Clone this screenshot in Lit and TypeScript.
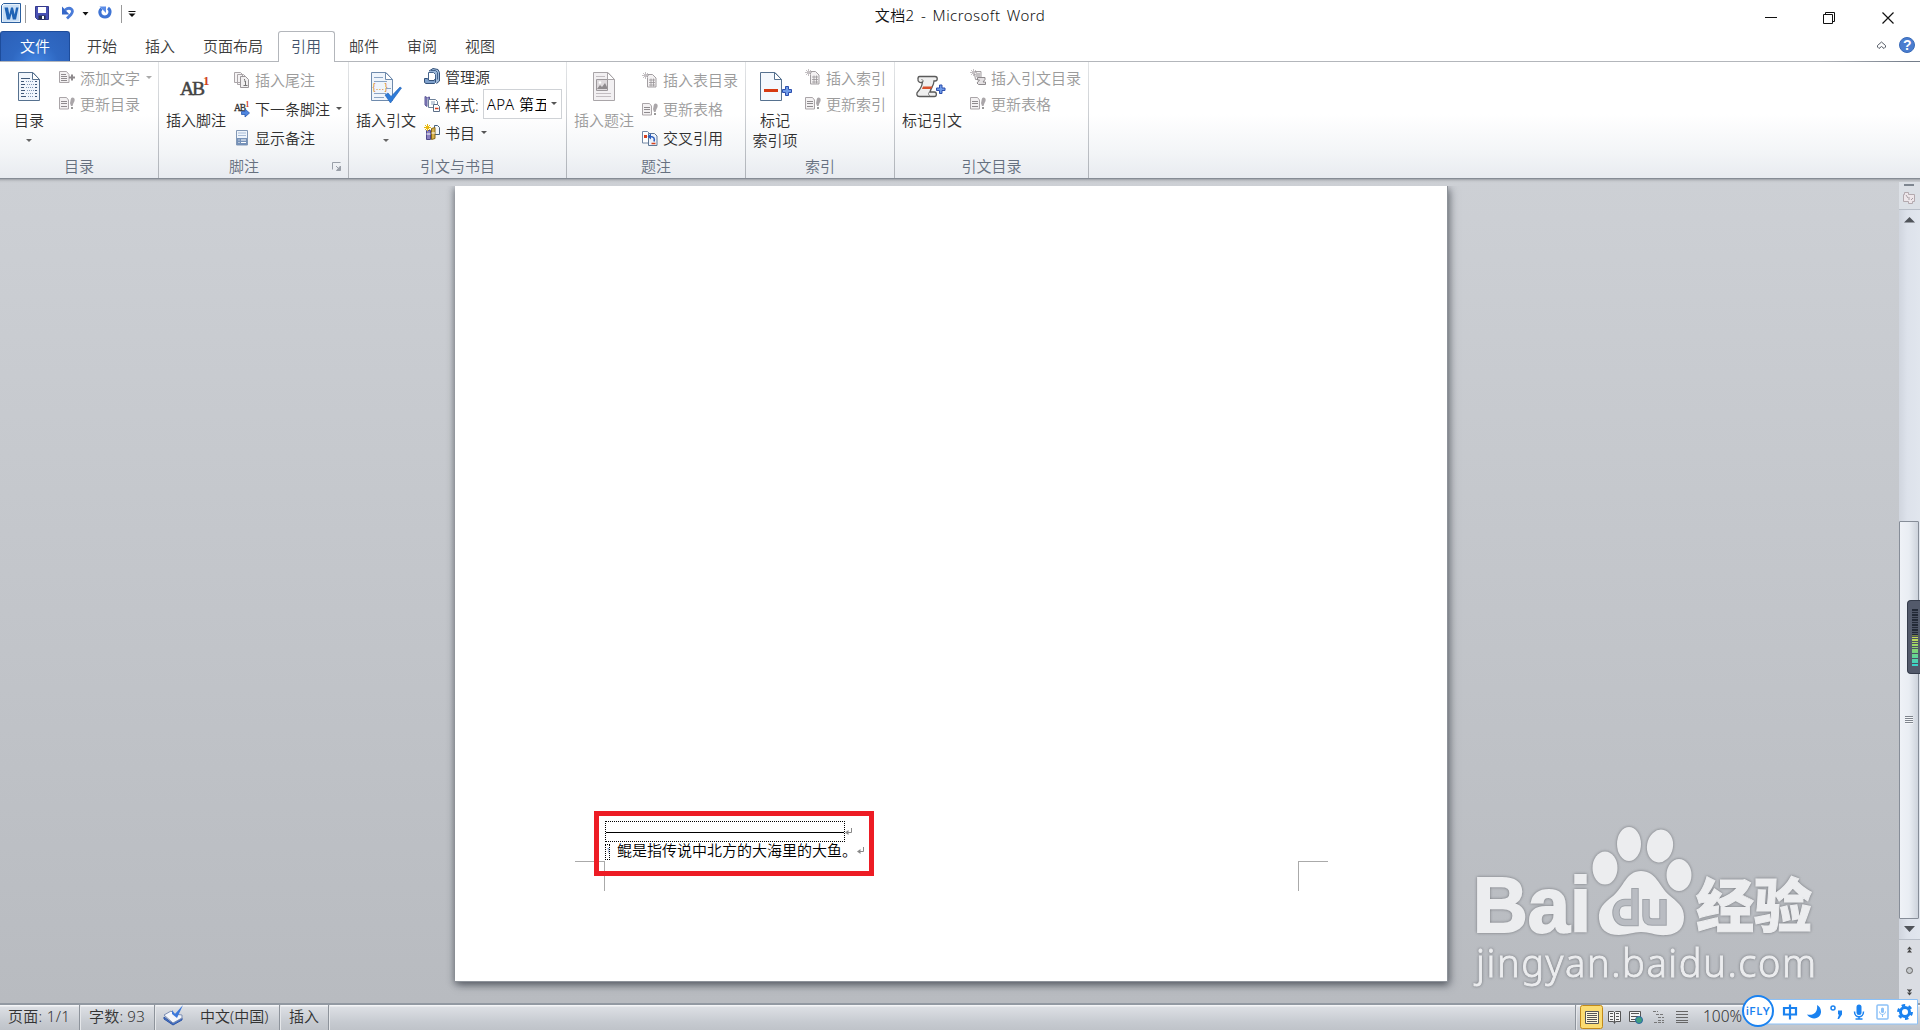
import { LitElement, html, css, svg, nothing } from 'lit';
import type { TemplateResult } from 'lit';
import { customElement, property } from 'lit/decorators.js';
import { classMap } from 'lit/directives/class-map.js';

const sheet = (stroke: string, fill: string) => svg`
  <path d="M1.5 1.5h14.5l6.5 7v21h-21z" fill=${fill} stroke=${stroke} />
  <path d="M15.500 1.500v7h7z" fill="#fff" stroke=${stroke} />
`;

const sparkle = (color: string) => svg`
  <path d="M3.500 0v7M0 3.500h7M1 1l5 5M6 1l-5 5" stroke=${color} stroke-width="1" />
`;

const icons: Record<string, TemplateResult<2>> = {
  toc: svg`
    ${sheet('#56718f', '#f1f6fc')}
    <path d="M4 7.500h9M4 10.500h3M4 13.500h4M4 16.500h3M4 19.500h4M4 22.500h3M4 25.500h5" stroke="#3f5878" />
    <path d="M9 10.500h8M10 13.500h7M9 16.500h8M10 19.500h7M9 22.500h8M11 25.500h6" stroke="#7d96b5" stroke-dasharray="1 1" />
    <path d="M18 10.500h2M18 13.500h2M18 16.500h2M18 19.500h2M18 22.500h2M18 25.500h2" stroke="#3f5878" />
  `,
  footnote: svg`
    <text x="0" y="24" font-family="Liberation Serif, serif" font-size="19.500" fill="#444" stroke="#444" stroke-width=".5" textLength="25">AB</text>
    <text x="23" y="14" font-family="Liberation Serif, serif" font-size="13" font-weight="700" fill="#d0421c">1</text>
  `,
  citation: svg`
    ${sheet('#6f8bad', '#eff5fc')}
    <path d="M4 6.500h9M4 10.500h13M4 22.500h12M4 26.500h10" stroke="#8aa4c4" />
    <text x="2.500" y="19" font-family="Liberation Sans, sans-serif" font-size="9" fill="#d97b13">{…}</text>
    <path d="M16 17.500h5" stroke="#8aa4c4" />
    <path d="M15 24l3-2 3 3.500 9-9.500 1.500 1-11 15z" fill="#2d7bd8" stroke="#1c5db3" stroke-width=".6" />
  `,
  caption: svg`
    ${sheet('#a9a5a8', '#f2f0f2')}
    <path d="M4 5.500h9M4 22.500h15M4 25.500h15" stroke="#c2bdc1" />
    <path d="M4.500 8.500h11v11h-11z" fill="#dedadd" stroke="#9d999c" />
    <path d="M5 18l3-4 2 2 3-4 2 4v2z" fill="#8f8b8e" />
    <circle cx="8" cy="11.500" r="1.200" fill="#fff" />
  `,
  mark: svg`
    ${sheet('#56718f', '#f4f8fd')}
    <path d="M5 18h14v3H5z" fill="#d63a12" />
    <path d="M26.500 15.500h3v3h3v3h-3v3h-3v-3h-3v-3h3z" fill="#6f9be8" stroke="#2c4fae" />
  `,
  markCite: svg`
    <path d="M3.500 5.500h15.500c3 0 3 4.500 0 4.500h-1c0 4-3 7-4 11h4.500c2.500 0 2.500 4.500 0 4.500H3.500c-3 0-3.500-3-1.500-5 3-3 4-6 4.500-9.500-2.500 1.500-5-.5-4.500-3 0-1.500.5-2.500 1.500-2.500z" fill="#efefef" stroke="#5a5a5a" stroke-width="1.300" />
    <path d="M6.500 11c1-1 .5-2.500-1-2.500M14 21c-2 0-2 3 0 4" stroke="#777" />
    <path d="M7 15.500h9.500l-1.500 2.500h-9z" fill="#d8512d" />
    <path d="M23.500 14h2.500v3h3v2.500h-3v3h-2.500v-3h-3v-2.500h3z" fill="#6f9be8" stroke="#2c4fae" />
  `,
  addText: svg`
    <path d="M.5 2.500h7l2.500 3v8H.5z" fill="#f3f1f2" stroke="#aaa5a8" />
    <path d="M2 5.500h5M2 7.500h6M2 9.500h6M2 11.500h6" stroke="#8f8b8e" />
    <path d="M10 8.500h6M13 5.500v6" stroke="#8d898c" stroke-width="2" />
  `,
  update: svg`
    <path d="M.5 2.500h7l2 2.500v9h-9z" fill="#f3f1f2" stroke="#aaa5a8" />
    <path d="M2 6.500h6M2 8.500h6M2 11.500h6" stroke="#8f8b8e" />
    <path d="M11 8c1-2 0-5 2.500-5.500 3 0 2.500 4 1 5.500l-1 3h-1.500z" fill="#aaa6a9" />
    <path d="M12 12h2v2h-2z" fill="#999" />
  `,
  endnote: svg`
    <path d="M.5.5h6l2 2v8h-8zM3.500 2.500h6l2 2v8h-8z" fill="#f5f3f4" stroke="#aaa5a8" />
    <path d="M6.500 4.500h5l3 3v8h-8z" fill="#f1eff0" stroke="#9b979a" />
    <path d="M10 9h1.500v4M9.500 13.500h4M10.500 7v1.200" stroke="#777" fill="none" />
  `,
  nextNote: svg`
    <text x="0" y="10" font-family="Liberation Serif, serif" font-size="9.500" fill="#333" stroke="#333" stroke-width=".3" textLength="12">AB</text>
    <text x="11.500" y="6" font-family="Liberation Serif, serif" font-size="7.500" font-weight="700" fill="#d0421c">1</text>
    <path d="M7.500 10.500h3.500v-2.500l4.500 4-4.500 4v-2.500h-3.500z" fill="#4f86e0" stroke="#2859b0" stroke-width=".8" />
  `,
  showNotes: svg`
    <path d="M2.500.5h11v14.500h-11z" fill="#eef4fb" stroke="#8298b6" />
    <path d="M4 3h8M4 5.500h8" stroke="#a8bcd7" />
    <path d="M3 8h10v7H3z" fill="#7591b8" />
    <path d="M4.500 10h1M4.500 12.500h1M7 10h5M7 12.500h5" stroke="#fff" />
  `,
  sources: svg`
    <path d="M5 3l4-2.500 5 1 1.500 3V13l-3 2.500" fill="#9db8d8" stroke="#34527a" />
    <path d="M4.500 4.500h5l2 2v6h-7z" fill="#fff" stroke="#45648c" />
    <path d="M7 2.500h4.500l2 2v7" fill="none" stroke="#45648c" />
    <path d="M.5 10.500h3l1.500 2h5l1.500-2v4l-1 1H2l-1.500-1z" fill="#7fa1cc" stroke="#34527a" />
  `,
  style: svg`
    <path d="M1 .5l2 1v9l-2-1.500zM3.500 1.500l2-.5v8" fill="#8c87c6" stroke="#5b5796" />
    <path d="M4.500 3.500h7l2 2v6h-9z" fill="#fff" stroke="#6d8098" />
    <path d="M7 6h4M7 8h4" stroke="#8aa0bd" />
    <path d="M9.500 8.500h4l2 2v5h-6z" fill="#fff" stroke="#5c6e87" />
    <path d="M11 12.500h3.500" stroke="#d33a1e" stroke-width="1.500" />
  `,
  biblio: svg`
    <path d="M2.500 6.500h4v9h-4z" fill="#8a80bf" stroke="#514a8c" />
    <path d="M10.500 1.500h3l2 2v7h-5z" fill="#f3f7fc" stroke="#45607f" />
    <path d="M7.500 4.500l3.500-1v11l-3.500 1z" fill="#d6b04c" stroke="#866717" />
    <path d="M7.500 9h3.500M2.500 10h4" stroke="#fff" />
    ${sparkle('#e8b80c')}
  `,
  tableOf: svg`
    <path d="M5.500 2.500h5l3.500 3.500v9h-8.500z" fill="#f3f1f2" stroke="#a29ea1" />
    <path d="M7 8h6M7 10.500h6M7 13h6M9 6.500v8M11.500 6.500v8" stroke="#989497" stroke-width=".8" />
    ${sparkle('#c4c0c3')}
  `,
  crossRef: svg`
    <path d="M.5 1.500h5l1.500 1.500v10h-6.500z" fill="#fff" stroke="#7288a5" />
    <path d="M2 5h3v3H2z" fill="#d8431f" />
    <path d="M6.500 3.500h6l2.500 2.500v9.500h-8.500z" fill="#edf3fb" stroke="#5c7695" />
    <path d="M9.500 13.500h4" stroke="#d8431f" stroke-width="1.500" />
    <path d="M12 11.500c1-3 0-5-4-5" stroke="#2a5dbd" stroke-width="1.600" fill="none" />
    <path d="M5.500 6.500l3.500-3v6z" fill="#2a5dbd" />
  `,
  citeToc: svg`
    <path d="M4 2.500h7v8H5.500z" fill="#f1eff0" stroke="#a29ea1" />
    <path d="M6 5h4M6 7h4" stroke="#989497" />
    <path d="M7.500 8.500h7.500v2l-2 2.500h2.500v2.500H8.500l-1.500-1.500 2.500-3H7.500z" fill="#e4e1e3" stroke="#8d898c" />
    ${sparkle('#c4c0c3')}
  `,
};

@customElement('ribbon-large-button')
export class RibbonLargeButton extends LitElement {
  @property() icon = '';
  @property() label = '';
  @property({ type: Boolean }) arrow = false;
  @property({ type: Boolean }) disabled = false;
  @property({ type: Boolean }) wide = false;

  static styles = css`
    :host {
      display: flex;
      flex-direction: column;
      align-items: center;
      box-sizing: border-box;
      flex: none;
      width: 74px;
      padding-top: 9px;
    }

    svg {
      width: 34px;
      height: 34px;
      margin-left: 10px;
      overflow: visible;
      flex: none;
    }

    .wide {
      margin-left: 2px;
    }

    .label {
      margin-top: 5px;
      line-height: 20px;
      white-space: pre;
      text-align: center;
      color: #303030;
    }

    .disabled {
      color: #9b9b9b;
    }

    .arrow {
      margin-top: 9px;
      border: 3px solid transparent;
      border-top-color: #666;
      border-bottom: 0;
    }
  `;

  render() {
    return html`
      <svg class=${classMap({ wide: this.wide })} viewBox="0 0 34 34" fill="none">${icons[this.icon]}</svg>
      <div class=${classMap({ label: true, disabled: this.disabled })}>${this.label}</div>
      ${this.arrow ? html`<div class="arrow"></div>` : nothing}
    `;
  }
}

@customElement('ribbon-item')
export class RibbonItem extends LitElement {
  @property() icon = '';
  @property() label = '';
  @property({ type: Boolean }) arrow = false;
  @property({ type: Boolean }) disabled = false;

  static styles = css`
    :host {
      display: flex;
      align-items: center;
    }

    svg {
      width: 16px;
      height: 16px;
      margin-right: 5px;
      overflow: visible;
    }

    .label {
      color: #303030;
      white-space: nowrap;
    }

    .disabled {
      color: #9b9b9b;
    }

    .arrow {
      margin-left: 6px;
      border: 3px solid transparent;
      border-top: 3px solid #555;
      border-bottom: 0;
    }

    .arrow.disabled {
      border-top-color: #aaa;
    }
  `;

  render() {
    return html`
      <svg viewBox="0 0 16 16" fill="none">${icons[this.icon]}</svg>
      <span class=${classMap({ label: true, disabled: this.disabled })}>${this.label}</span>
      ${this.arrow ? html`<span class=${classMap({ arrow: true, disabled: this.disabled })}></span>` : nothing}
      <slot></slot>
    `;
  }
}

@customElement('word-titlebar')
export class WordTitlebar extends LitElement {
  static styles = css`
    :host {
      display: grid;
      grid-template-columns: 1fr auto 1fr;
      height: 31px;
      background: #fff;
    }

    .quick {
      padding-top: 3px;
    }

    .title {
      line-height: 30px;
      color: #111;
      letter-spacing: 0.45px;
      word-spacing: 2px;
    }

    .controls {
      display: flex;
      justify-content: flex-end;
    }

    svg {
      display: block;
    }
  `;

  render() {
    return html`
      <svg class="quick" width="140" height="26" viewBox="0 0 140 26" fill="none">
        <path d="M3.500.5h17v19H1.500V2.500z" fill="#e7f1fb" stroke="#2b5f9e" />
        <path d="M3 19V3l2-1h14v16z" fill="#c8def5" />
        <path d="M4.500 4.500h3.500l1.300 7 1.700-7h2l1.700 7 1.300-7h2.500l-2.500 12h-3.200l-1.300-6-1.500 6h-3z" fill="#1f63b5" />
        <path d="M25.500 2v18" stroke="#999" />
        <path d="M35.500 3.500h13v13h-11l-2-2z" fill="#4a52b5" stroke="#35398c" />
        <path d="M38 4h8v6h-8z" fill="#fff" />
        <path d="M38.500 12.500h7v4h-7z" fill="#27304d" />
        <path d="M42 13h2v3h-2z" fill="#fff" />
        <path d="M65 7c5-4 10 0 6 4.500l-4 4" stroke="#4a7bd8" stroke-width="2.800" />
        <path d="M62 3.500v8h7.500z" fill="#3567c8" />
        <path d="M82.500 9h6l-3 3.500z" fill="#111" />
        <path d="M108 5c4 3 1.500 9-3 9s-7-5-3.500-8.500" stroke="#3f74d4" stroke-width="3" />
        <path d="M99.500 3.500h6.500v6.500z" fill="#5c8de8" />
        <path d="M121.500 2v18" stroke="#999" />
        <path d="M128.500 8.500h7" stroke="#111" />
        <path d="M128.500 10.500h7l-3.500 3.500z" fill="#111" />
      </svg>
      <div class="title">文档2 - Microsoft Word</div>
      <div class="controls">
        <svg width="160" height="31" viewBox="0 0 160 31" fill="none" stroke="#111">
          <path d="M5 17.500h12" />
          <path d="M63.500 14.500h9v9h-9zM65.500 14v-1.500h9v9h-1.500" />
          <path d="M122.500 12.500l11 11M133.500 12.500l-11 11" stroke-width="1.200" />
        </svg>
      </div>
    `;
  }
}

@customElement('word-tabs')
export class WordTabs extends LitElement {
  static styles = css`
    :host {
      display: flex;
      height: 31px;
      background: linear-gradient(90deg, #b3b6bb 0 1820px, #747d8a 1910px) bottom / 100% 1px no-repeat #fff;
    }

    .file {
      box-sizing: border-box;
      width: 70px;
      height: 30px;
      margin-right: 3px;
      border: 1px solid #1d4c9b;
      border-bottom: 0;
      border-radius: 3px 3px 0 0;
      background: radial-gradient(ellipse at 50% 115%, #4387e4 0, #2f68c2 50%, #2c60b8 100%);
      color: #fff;
      text-align: center;
      line-height: 29px;
    }

    .tab {
      padding: 0 14px;
      line-height: 31px;
      color: #3c3c3c;
    }

    .active {
      box-sizing: border-box;
      width: 57px;
      margin: 0 0 0 1px;
      padding: 0 12px;
      border: 1px solid #b3b6bb;
      border-bottom: 0;
      border-radius: 3px 3px 0 0;
      background: #fff;
      line-height: 29px;
      color: #44546c;
    }

    .help {
      margin-left: auto;
    }
  `;

  render() {
    return html`
      <div class="file">文件</div>
      ${['开始', '插入', '页面布局', '引用', '邮件', '审阅', '视图'].map(
        (name) => html`<div class=${classMap({ tab: true, active: name === '引用' })}>${name}</div>`
      )}
      <svg class="help" width="50" height="30" viewBox="0 0 50 30" fill="none">
        <path d="M7.500 16v-1.500l4-3.500 4 3.500V16l-1.500 1.500-2.500-2-2.500 2z" stroke="#555b66" />
        <circle cx="37" cy="14" r="7.500" fill="#4a7dcf" stroke="#396bb9" />
        <text x="33" y="19" font-family="Liberation Sans, sans-serif" font-size="14" font-weight="700" fill="#fff">?</text>
      </svg>
    `;
  }
}

@customElement('word-ribbon')
export class WordRibbon extends LitElement {
  static styles = css`
    :host {
      display: flex;
      height: 116px;
      border-bottom: 1px solid #868c95;
      background: linear-gradient(#fff 45%, #f3f5f7 78%, #e8ebf0);
    }

    .group {
      display: flex;
      flex-direction: column;
      box-sizing: border-box;
      border-image: linear-gradient(#e4e6e8, #aeb2b8) 1;
      border-width: 0 1px 0 0;
      border-style: solid;
    }

    .body {
      display: flex;
      height: 93px;
    }

    .items {
      display: flex;
      flex-direction: column;
      padding-left: 1px;
    }

    .two {
      padding-top: 2px;
    }

    .two ribbon-item {
      height: 26px;
    }

    .mid {
      padding-top: 0;
    }

    .mid ribbon-item {
      height: 28px;
    }

    .three {
      padding-top: 3px;
    }

    .three ribbon-item {
      height: 29px;
    }

    .caption {
      display: grid;
      grid-template-columns: 20px 1fr 20px;
      text-align: center;
      line-height: 22px;
      color: #66707f;
    }

    .caption span {
      grid-column: 2;
    }

    .caption svg {
      margin: 6px 0 0 2px;
    }

    .g1 {
      width: 159px;
    }

    .g2 {
      width: 190px;
    }

    .g2 .caption {
      grid-template-columns: 0 1fr 19px;
    }

    .g3 {
      width: 218px;
    }

    .g4 {
      width: 179px;
    }

    .g5 {
      width: 149px;
    }

    .g6 {
      width: 194px;
    }

    .narrow {
      width: 58px;
    }

    .combo {
      display: flex;
      align-items: center;
      box-sizing: border-box;
      width: 79px;
      height: 30px;
      margin: -1px 0 0 4px;
      padding: 0 4px 0 3px;
      border: 1px solid #cfd2d6;
      background: #fff;
      color: #000;
      letter-spacing: 0.5px;
    }

    .combo span {
      width: 60px;
      overflow: hidden;
      white-space: nowrap;
    }

    .combo i {
      margin-left: 5px;
      border: 3px solid transparent;
      border-top: 3px solid #555;
      border-bottom: 0;
    }
  `;

  render() {
    return html`
      <div class="group g1">
        <div class="body">
          <ribbon-large-button class="narrow" icon="toc" label="目录" arrow></ribbon-large-button>
          <div class="items two">
            <ribbon-item icon="addText" label="添加文字" arrow disabled></ribbon-item>
            <ribbon-item icon="update" label="更新目录" disabled></ribbon-item>
          </div>
        </div>
        <div class="caption"><span>目录</span></div>
      </div>
      <div class="group g2">
        <div class="body">
          <ribbon-large-button icon="footnote" label="插入脚注" wide></ribbon-large-button>
          <div class="items three">
            <ribbon-item icon="endnote" label="插入尾注" disabled></ribbon-item>
            <ribbon-item icon="nextNote" label="下一条脚注" arrow></ribbon-item>
            <ribbon-item icon="showNotes" label="显示备注"></ribbon-item>
          </div>
        </div>
        <div class="caption">
          <span>脚注</span>
          <svg width="11" height="11" viewBox="0 0 11 11" fill="none" stroke="#999fa8">
            <path d="M1.500 8.500v-7h8M5 5l3.500 3.500" />
            <path d="M9.500 5v4.500H5.500z" fill="#999fa8" />
          </svg>
        </div>
      </div>
      <div class="group g3">
        <div class="body">
          <ribbon-large-button icon="citation" label="插入引文" arrow wide></ribbon-large-button>
          <div class="items mid">
            <ribbon-item icon="sources" label="管理源"></ribbon-item>
            <ribbon-item icon="style" label="样式:">
              <div class="combo"><span>APA 第五版</span><i></i></div>
            </ribbon-item>
            <ribbon-item icon="biblio" label="书目" arrow></ribbon-item>
          </div>
        </div>
        <div class="caption"><span>引文与书目</span></div>
      </div>
      <div class="group g4">
        <div class="body">
          <ribbon-large-button icon="caption" label="插入题注" disabled></ribbon-large-button>
          <div class="items three">
            <ribbon-item icon="tableOf" label="插入表目录" disabled></ribbon-item>
            <ribbon-item icon="update" label="更新表格" disabled></ribbon-item>
            <ribbon-item icon="crossRef" label="交叉引用"></ribbon-item>
          </div>
        </div>
        <div class="caption"><span>题注</span></div>
      </div>
      <div class="group g5">
        <div class="body">
          <ribbon-large-button class="narrow" icon="mark" label=${'标记\n索引项'} wide></ribbon-large-button>
          <div class="items two">
            <ribbon-item icon="tableOf" label="插入索引" disabled></ribbon-item>
            <ribbon-item icon="update" label="更新索引" disabled></ribbon-item>
          </div>
        </div>
        <div class="caption"><span>索引</span></div>
      </div>
      <div class="group g6">
        <div class="body">
          <ribbon-large-button icon="markCite" label="标记引文" wide></ribbon-large-button>
          <div class="items two">
            <ribbon-item icon="citeToc" label="插入引文目录" disabled></ribbon-item>
            <ribbon-item icon="update" label="更新表格" disabled></ribbon-item>
          </div>
        </div>
        <div class="caption"><span>引文目录</span></div>
      </div>
    `;
  }
}

@customElement('word-document')
export class WordDocument extends LitElement {
  static styles = css`
    :host {
      display: block;
      box-sizing: border-box;
      width: 993px;
      height: 796px;
      padding: 635px 0 0 120px;
      background: #fff;
      border-right: 1px solid #8d9299;
      border-bottom: 1px solid #8d9299;
      box-shadow: 2px 3px 8px rgba(50, 55, 65, 0.6), -2px 2px 6px rgba(50, 55, 65, 0.3);
      clip-path: inset(0 -14px -14px -14px);
      position: relative;
      color: #000;
    }

    .separator {
      display: flex;
      align-items: center;
      height: 21px;
      margin-left: 30px;
    }

    .rule {
      display: flex;
      align-items: center;
      box-sizing: border-box;
      width: 240px;
      height: 21px;
      border: 1px dotted #000;
    }

    .rule::after {
      content: '';
      flex: 1;
      height: 1px;
      margin-top: 1px;
      background: #000;
    }

    .note {
      display: flex;
      align-items: center;
      height: 17px;
      margin: 0 0 2px 30px;
      line-height: 17px;
      white-space: nowrap;
    }

    .ref {
      box-sizing: border-box;
      width: 5px;
      height: 16px;
      margin: 2px 7px 0 0;
      border: 1px dotted #000;
      font-size: 8px;
      line-height: 9px;
      color: #2b6ca8;
    }

    .margins {
      display: flex;
      justify-content: space-between;
      width: 753px;
    }

    .margins div {
      width: 29px;
      height: 29px;
      border: 0 solid #aaa;
      border-top-width: 1px;
    }

    .margins .left {
      border-right-width: 1px;
    }

    .margins .right {
      border-left-width: 1px;
    }

    .frame {
      position: absolute;
      left: 139px;
      top: 625px;
      box-sizing: border-box;
      width: 280px;
      height: 65px;
      border: 5px solid #ed1c24;
    }
  `;

  private returnMark() {
    return html`
      <svg width="8" height="9" viewBox="0 0 8 9" fill="none">
        <path d="M6.500 1v4.500H2" stroke="#888" />
        <path d="M0 5.500l3.500-2.500v5z" fill="#888" />
      </svg>
    `;
  }

  render() {
    return html`
      <div class="separator">
        <div class="rule"></div>
        ${this.returnMark()}
      </div>
      <div class="note">
        <div class="ref">1</div>
        鲲是指传说中北方的大海里的大鱼。${this.returnMark()}
      </div>
      <div class="margins">
        <div class="left"></div>
        <div class="right"></div>
      </div>
      <div class="frame"></div>
    `;
  }
}

@customElement('word-scrollbar')
export class WordScrollbar extends LitElement {
  static styles = css`
    :host {
      display: flex;
      flex-direction: column;
      width: 21px;
      margin-top: 3px;
      background: linear-gradient(90deg, #d0d5de, #dde2eb 40%, #e1e6ee);
    }

    svg {
      display: block;
      flex: none;
    }

    .thumb {
      display: flex;
      align-items: center;
      justify-content: center;
      box-sizing: border-box;
      width: 20px;
      height: 398px;
      margin-top: 291px;
      border: 1px solid #868d98;
      border-radius: 1px;
      background: linear-gradient(90deg, #eff2f7, #e9edf3 50%, #cdd3dc);
    }

    .grip {
      width: 8px;
      height: 8px;
      background: repeating-linear-gradient(#7e848d 0 1px, #f4f6f9 1px 2px);
    }
  `;

  render() {
    return html`
      <svg width="21" height="48" viewBox="0 0 21 48" fill="none">
        <path d="M0 0h21v27H0z" fill="#dce0e6" />
        <path d="M5 2h10v2H5z" fill="#7e8690" />
        <path d="M4.500 12.500h1v-2h4v2h6v7h-2v2h-4v-2h-5z" fill="#ede6ea" stroke="#b3a9ae" />
        <path d="M7 13l2 3M10 15v3M12 18l2-2" stroke="#a79ea3" />
        <path d="M0 27.500h21" stroke="#b8bec8" />
        <path d="M5 40.500l5.500-5.500 5.500 5.500z" fill="#50545a" />
      </svg>
      <div class="thumb"><div class="grip"></div></div>
      <svg width="21" height="84" viewBox="0 0 21 84" fill="none">
        <path d="M5 7h11l-5.500 6z" fill="#50545a" />
        <path d="M0 20h21v64H0z" fill="#dadde3" />
        <path d="M0 20.500h21" stroke="#b8bec8" />
        <path d="M8 30.500l2.500-3 2.500 3zM8 33.500l2.500-3 2.500 3z" fill="#444" />
        <circle cx="10.500" cy="51.500" r="3" fill="#c4c8cb" stroke="#666" />
        <path d="M8 70.500l2.500 3 2.500-3zM8 73.500l2.500 3 2.500-3zM8 70h5v1H8z" fill="#444" />
      </svg>
    `;
  }
}

@customElement('baidu-watermark')
export class BaiduWatermark extends LitElement {
  static styles = css`
    svg {
      display: block;
      filter: drop-shadow(0 0 1.5px rgba(90, 92, 98, 0.75));
    }
  `;

  render() {
    return html`
      <svg width="360" height="180" viewBox="0 0 360 180" fill="#ecedef">
        <text x="13" y="112" font-family="Liberation Sans, sans-serif" font-size="77" font-weight="700" stroke="#ecedef" stroke-width="2" textLength="118" lengthAdjust="spacingAndGlyphs">Bai</text>
        <ellipse cx="145" cy="48" rx="12.500" ry="16.500" />
        <ellipse cx="169" cy="24" rx="12" ry="17" />
        <ellipse cx="200" cy="26" rx="13" ry="16.500" transform="rotate(10 200 26)" />
        <ellipse cx="219" cy="55" rx="12.500" ry="16" />
        <path d="M181 51c-15 0-17 16-28 25-9 7-15 12-14 23 1 10 7 16 20 16 8 0 15-3 22-3 9 0 15 4 26 3 11-1 17-7 17-18 0-11-7-15-15-22-10-9-13-24-28-24z" />
        <g fill="none" stroke="#9fa3a9" stroke-width="7.500">
          <path d="M175 68v34.500h-10c-12 0-12-20 0-20h6M186 79v17c0 4 2 6 6 6h11V79" />
        </g>
        <g fill="none" stroke="#b9bcc2" stroke-width="5.500">
          <path d="M175 69v33.500h-10c-12 0-12-20 0-20h6M186 80v16c0 4 2 6 6 6h11V80" />
        </g>
        <text x="236" y="107" font-family="Noto Sans CJK SC, sans-serif" font-size="58" font-weight="900" stroke="#ecedef" stroke-width="1" textLength="116" lengthAdjust="spacingAndGlyphs">经验</text>
        <text x="16" y="157" font-family="Noto Sans, sans-serif" font-size="38" stroke="#ecedef" stroke-width=".9" textLength="340" lengthAdjust="spacing">jingyan.baidu.com</text>
      </svg>
    `;
  }
}

@customElement('word-statusbar')
export class WordStatusbar extends LitElement {
  static styles = css`
    :host {
      display: flex;
      align-items: stretch;
      box-sizing: border-box;
      height: 27px;
      border-top: 2px solid #9299a2;
      background: linear-gradient(#f4f5f7 0 1px, #dcdfe4 2px, #c6cad0 70%, #bfc3c9);
      color: #333;
      line-height: 22px;
    }

    .cell {
      box-sizing: border-box;
      flex: none;
      border-right: 1px solid #8d939b;
      box-shadow: 1px 0 #e5e7ea;
      white-space: nowrap;
    }

    .page {
      width: 80px;
      padding-left: 8px;
      letter-spacing: 0.3px;
    }

    .words {
      width: 75px;
      padding-left: 9px;
      letter-spacing: 0.2px;
    }

    .lang {
      display: flex;
      gap: 16px;
      width: 125px;
      padding-left: 8px;
    }

    .mode {
      width: 49px;
      padding-left: 9px;
    }

    .spring {
      width: 1247px;
    }

    .views {
      flex: none;
    }

    .zoom {
      margin-left: 13px;
      font-size: 15.5px;
    }
  `;

  render() {
    return html`
      <div class="cell page">页面: 1/1</div>
      <div class="cell words">字数: 93</div>
      <div class="cell lang">
        <svg width="21" height="22" viewBox="0 0 21 22" fill="none">
          <path d="M1 12l8 6 10-5v2l-9 5-9-6z" fill="#4774c9" stroke="#2e55a5" />
          <path d="M1 10l7-4 3 3 8 1v3l-9 5z" fill="#f4f6fb" stroke="#7d8fb3" />
          <path d="M9 5l3 4 8-9-6 13-5-4z" fill="#3c78dc" />
        </svg>
        <span>中文(中国)</span>
      </div>
      <div class="cell mode">插入</div>
      <div class="cell spring"></div>
      <svg class="views" width="114" height="25" viewBox="0 0 114 25" fill="none" stroke="#555">
        <rect x="4.500" y=".5" width="22" height="23" rx="2" fill="#fbdc72" stroke="#c28a1a" />
        <path d="M9.500 6.500h13v12h-13z" fill="#fff8dc" />
        <path d="M11 8.500h10M11 10.500h10M11 12.500h10M11 14.500h10M11 16.500h10" />
        <path d="M32.500 6.500h5l1 1 1-1h5v10h-5l-1 2-1-2h-5zM38.500 7v11" fill="#f4f4f4" />
        <path d="M34 8.500h3M34 11.500h3M34 14.500h3M40 8.500h3M40 11.500h3M40 14.500h3" />
        <path d="M53.500 6.500h11v10h-11z" fill="#f4f4f4" />
        <path d="M55 8.500h8M55 11.500h7M55 14.500h5" />
        <circle cx="63" cy="15" r="3.500" fill="#3f9f80" stroke="#2a65a8" />
        <path d="M77 6.500h5M80 9.500h8M82 12.500h6M82 15.500h6M78 17.500h10" stroke="#777" stroke-dasharray="3 1" />
        <path d="M100 6.500h12M100 9.500h12M100 12.500h12M100 15.500h12M100 17.500h12" stroke="#666" />
      </svg>
      <span class="zoom">100%</span>
    `;
  }
}

@customElement('ime-toolbar')
export class ImeToolbar extends LitElement {
  static styles = css`
    svg {
      display: block;
    }
  `;

  render() {
    return html`
      <svg width="178" height="36" viewBox="0 0 178 36" fill="none">
        <path d="M16 4.500h159.500v24.500H16z" fill="#fff" stroke="#8cc1f7" />
        <circle cx="16" cy="16" r="15" fill="#fff" stroke="#1a82f0" stroke-width="2" />
        <text x="4" y="19.500" font-family="Inter, sans-serif" font-size="10.500" font-weight="600" fill="#1a82f0" textLength="24">iFLY</text>
        <g stroke="#1a82f0" stroke-width="2.200">
          <path d="M42 13h12v6.500H42zM48 9.500v15" />
          <circle cx="91" cy="13" r="2" stroke-width="1.500" />
          <path d="M112.500 16.500c0 7 9 7 9 0M117 22v2M113.500 24h7" stroke-width="1.500" />
        </g>
        <path d="M75 10c1 7-3 11-10 9.500 4 6 13 5 14-2 .3-3-1-6-4-7.500z" fill="#1a82f0" />
        <path d="M96 15.500h4v4l-3 4.500h-1.500l1.500-4.500h-1z" fill="#1a82f0" />
        <rect x="114.500" y="9.500" width="5" height="10.500" rx="2.500" fill="#1a82f0" />
        <rect x="135" y="10" width="11" height="14" rx="1" stroke="#8cc1f7" stroke-width="1.500" />
        <rect x="139" y="12.500" width="3" height="5.500" rx="1.500" fill="#8cc1f7" />
        <path d="M137.500 16.500c0 4 6 4 6 0M140.500 19.500v2.500" stroke="#8cc1f7" />
        <circle cx="163" cy="17" r="4.500" stroke="#1a82f0" stroke-width="3" />
        <circle cx="163" cy="17" r="6.700" stroke="#1a82f0" stroke-width="2.500" stroke-dasharray="3.500 3.510" />
      </svg>
    `;
  }
}

@customElement('app-root')
export class AppRoot extends LitElement {
  static styles = css`
    :host {
      display: flex;
      flex-direction: column;
      position: relative;
      width: 1920px;
      height: 1030px;
      overflow: hidden;
      background: #fff;
      font-family: 'Noto Sans', 'Noto Sans CJK SC', sans-serif;
      font-size: 15px;
      font-weight: 350;
    }

    .workspace {
      display: flex;
      flex: 1;
      min-height: 0;
      background: linear-gradient(#9ea2a8, #c4c7cb 2px, transparent 4px), linear-gradient(#cdd0d5, #b8bbc0);
    }

    word-document {
      margin: 7px 451px 0 455px;
      flex: none;
    }

    baidu-watermark {
      position: absolute;
      left: 1460px;
      top: 820px;
    }

    .meter {
      position: absolute;
      right: 0;
      top: 600px;
      box-sizing: border-box;
      width: 13px;
      height: 74px;
      padding: 8px 2px 7px 4px;
      border: 1px solid #353c4b;
      border-right: 0;
      border-radius: 4px 0 0 4px;
      background: #535a6b;
    }

    .level {
      height: 57px;
      background: repeating-linear-gradient(transparent 0 1.5px, #4c5364 1.5px 2.5px),
        linear-gradient(#222936 0 26px, #cddd50 27px, #7bd477 42px, #36d4ce);
    }

    ime-toolbar {
      position: absolute;
      left: 1742px;
      top: 995px;
    }
  `;

  render() {
    return html`
      <word-titlebar></word-titlebar>
      <word-tabs></word-tabs>
      <word-ribbon></word-ribbon>
      <div class="workspace">
        <word-document></word-document>
        <word-scrollbar></word-scrollbar>
      </div>
      <word-statusbar></word-statusbar>
      <baidu-watermark></baidu-watermark>
      <div class="meter"><div class="level"></div></div>
      <ime-toolbar></ime-toolbar>
    `;
  }
}
